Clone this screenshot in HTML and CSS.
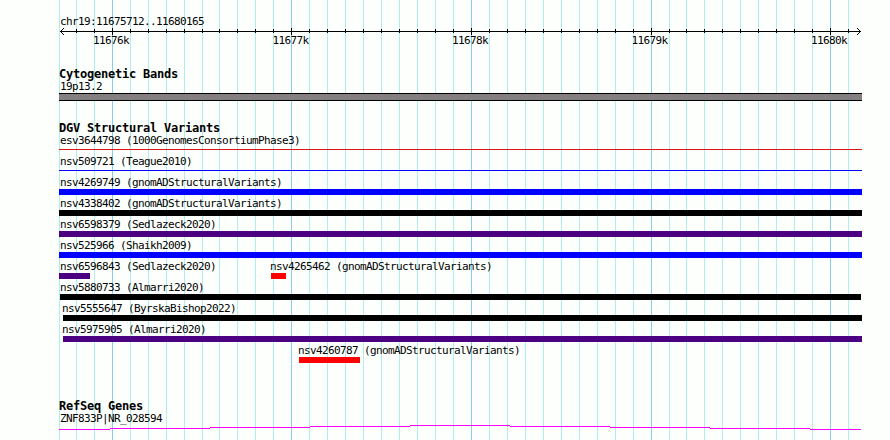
FILE: index.html
```html
<!DOCTYPE html>
<html lang="en">
<head>
<meta charset="utf-8">
<title>chr19:11675712..11680165</title>
<link rel="stylesheet" href="styles.css">
</head>
<body>
<main class="browser">
  <svg class="grid" width="890" height="440" shape-rendering="crispEdges" aria-hidden="true">
    <path class="minor" d="M59.5 0v440M76.5 0v440M94.5 0v440M130.5 0v440M148.5 0v440M166.5 0v440M184.5 0v440M202.5 0v440M219.5 0v440M237.5 0v440M255.5 0v440M273.5 0v440M309.5 0v440M327.5 0v440M345.5 0v440M363.5 0v440M381.5 0v440M399.5 0v440M417.5 0v440M435.5 0v440M453.5 0v440M489.5 0v440M507.5 0v440M525.5 0v440M543.5 0v440M561.5 0v440M579.5 0v440M597.5 0v440M615.5 0v440M633.5 0v440M669.5 0v440M686.5 0v440M704.5 0v440M722.5 0v440M740.5 0v440M758.5 0v440M776.5 0v440M794.5 0v440M812.5 0v440M848.5 0v440"/>
    <path class="major" d="M112.5 0v440M291.5 0v440M471.5 0v440M651.5 0v440M830.5 0v440"/>
  </svg>

  <header class="ruler">
    <p class="label">chr19:11675712..11680165</p>
    <svg class="axis" width="803" height="7" viewBox="59 28 803 7" shape-rendering="crispEdges">
      <path d="M60 31.5H861M76.5 29v4M94.5 29v4M130.5 29v4M148.5 29v4M166.5 29v4M184.5 29v4M202.5 29v4M219.5 29v4M237.5 29v4M255.5 29v4M273.5 29v4M309.5 29v4M327.5 29v4M345.5 29v4M363.5 29v4M381.5 29v4M399.5 29v4M417.5 29v4M435.5 29v4M453.5 29v4M489.5 29v4M507.5 29v4M525.5 29v4M543.5 29v4M561.5 29v4M579.5 29v4M597.5 29v4M615.5 29v4M633.5 29v4M669.5 29v4M686.5 29v4M704.5 29v4M722.5 29v4M740.5 29v4M758.5 29v4M776.5 29v4M794.5 29v4M812.5 29v4M848.5 29v4M112.5 28v7M291.5 28v7M471.5 28v7M651.5 28v7M830.5 28v7"/>
      <path d="M61 30.5h1M62 29.5h1M63 28.5h1M61 32.5h1M62 33.5h1M63 34.5h1M859 30.5h1M858 29.5h1M857 28.5h1M859 32.5h1M858 33.5h1M857 34.5h1"/>
    </svg>
    <div class="ticks"><span>11676k</span><span>11677k</span><span>11678k</span><span>11679k</span><span>11680k</span></div>
  </header>

  <section class="track bands">
    <h2>Cytogenetic Bands</h2>
    <p class="label">19p13.2</p>
    <div class="band"></div>
  </section>

  <section class="track variants">
    <h2>DGV Structural Variants</h2>
    <div class="row"><p class="label">esv3644798 (1000GenomesConsortiumPhase3)</p><div class="bar thin loss"></div></div>
    <div class="row"><p class="label">nsv509721 (Teague2010)</p><div class="bar thin gain"></div></div>
    <div class="row"><p class="label">nsv4269749 (gnomADStructuralVariants)</p><div class="bar gain"></div></div>
    <div class="row"><p class="label">nsv4338402 (gnomADStructuralVariants)</p><div class="bar other"></div></div>
    <div class="row"><p class="label">nsv6598379 (Sedlazeck2020)</p><div class="bar inversion"></div></div>
    <div class="row"><p class="label">nsv525966 (Shaikh2009)</p><div class="bar gain"></div></div>
    <div class="row pair">
      <div class="feature" style="width:211px"><p class="label">nsv6596843 (Sedlazeck2020)</p><div class="bar inversion" style="width:31px"></div></div>
      <div class="feature inset"><p class="label">nsv4265462 (gnomADStructuralVariants)</p><div class="bar loss" style="width:15px"></div></div>
    </div>
    <div class="row"><p class="label">nsv5880733 (Almarri2020)</p><div class="bar other" style="margin-left:1px;width:801px"></div></div>
    <div class="row inset" style="margin-left:4px"><p class="label">nsv5555647 (ByrskaBishop2022)</p><div class="bar other"></div></div>
    <div class="row inset" style="margin-left:4px"><p class="label">nsv5975905 (Almarri2020)</p><div class="bar inversion"></div></div>
    <div class="row inset" style="margin-left:240px"><p class="label">nsv4260787 (gnomADStructuralVariants)</p><div class="bar loss" style="width:61px"></div></div>
  </section>

  <section class="track genes">
    <h2>RefSeq Genes</h2>
    <p class="label">ZNF833P|NR_028594</p>
    <svg class="gene" width="803" height="5" viewBox="59 425 803 5" shape-rendering="crispEdges">
      <path d="M59 429.5h51M110 428.5h100M210 427.5h100M310 426.5h100M410 425.5h100M510 426.5h100M610 427.5h100M710 428.5h100M810 429.5h51"/>
    </svg>
  </section>
</main>
</body>
</html>
```
FILE: styles.css
```css
* { box-sizing: border-box; }

body {
  margin: 0;
  background: #fdfffc;
  color: #000;
  font: 11px/12px "DejaVu Sans Mono", "Liberation Mono", monospace;
  letter-spacing: -0.622px;
}

.browser {
  position: relative;
  width: 890px;
  height: 440px;
  padding: 15px 28px 0 59px;
  overflow: hidden;
}

.grid {
  position: absolute;
  inset: 0;
  z-index: -1;
}

svg { display: block; fill: none; }
.minor { stroke: #afeeee; }
.major { stroke: #87ceeb; }
.axis path { stroke: #000; }
.gene path { stroke: #f0f; }

.label {
  height: 12px;
  margin: 0;
  padding-left: 1px;
  line-height: 14px;
  white-space: pre;
}

h2 {
  height: 12px;
  margin: 0;
  font-size: 12px;
  line-height: 13px;
  letter-spacing: -0.224px;
  white-space: pre;
}

.ruler { height: 53px; }
.axis { margin-top: 1px; }

.ticks {
  display: flex;
  justify-content: space-between;
  width: 754px;
  margin-left: 34px;
}

.ticks span { width: 36px; white-space: pre; }

.bands { height: 54px; }

.band {
  height: 8px;
  margin-top: 1px;
  background: #848082;
  border: solid #000;
  border-width: 1px 0;
}

.variants { height: 278px; }
.row { height: 21px; }
.pair { display: flex; }
.inset .label { padding-left: 0; margin-left: -1px; }

.bar { height: 6px; margin-top: 1px; }
.thin { height: 1px; margin-top: 3px; }
.pair .feature.inset { margin-left: 1px; }

.gain { background: #00f; }
.loss { background: #f00; }
.thin.loss { background: #dc1414; }
.other { background: #000; }
.inversion { background: #4b0082; }

.gene { margin-top: 1px; }
```
